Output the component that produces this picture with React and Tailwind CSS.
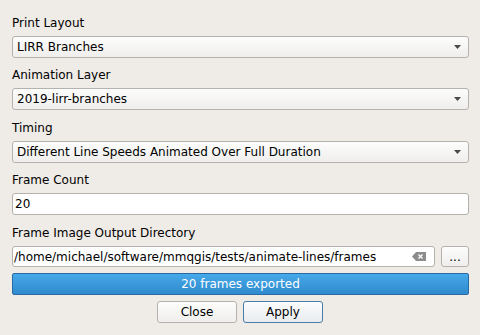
import React from "react";

const font = { fontFamily: '"DejaVu Sans", "Liberation Sans", sans-serif' };

function Arrow() {
  return (
    <svg width="7" height="4" viewBox="0 0 7 4" className="block">
      <path d="M0 0 H7 L3.5 4 Z" fill="#4a4a4a" />
    </svg>
  );
}

function Combo({ text }) {
  return (
    <div className="flex h-[22px] w-[457px] items-center justify-between rounded-[3px] border border-[#b5b2ae] bg-gradient-to-b from-[#fdfdfd] to-[#efeeec] pl-[4px] pr-[7px] text-[12px] text-black">
      <span>{text}</span>
      <Arrow />
    </div>
  );
}

function Label({ children, top }) {
  return (
    <div className={`h-[16px] text-[12px] leading-[16px] text-black ${top}`}>{children}</div>
  );
}

function ClearIcon() {
  return (
    <svg width="14" height="9" viewBox="0 0 14 9" className="block">
      <path d="M0 4.5 L4 0 H14 V9 H4 Z" fill="#8c8c8c" />
      <path d="M6.5 2.5 L10.5 6.5 M10.5 2.5 L6.5 6.5" stroke="#ffffff" strokeWidth="1.3" />
    </svg>
  );
}

export default function App() {
  return (
    <div className="h-[335px] w-[480px] bg-[#efebe7] pl-[12px]" style={font}>
      <div className="flex flex-col">
        <Label top="mt-[15px]">Print Layout</Label>
        <div className="mt-[5px]">
          <Combo text="LIRR Branches" />
        </div>
        <Label top="mt-[9px]">Animation Layer</Label>
        <div className="mt-[5px]">
          <Combo text="2019-lirr-branches" />
        </div>
        <Label top="mt-[10px]">Timing</Label>
        <div className="mt-[5px]">
          <Combo text="Different Line Speeds Animated Over Full Duration" />
        </div>
        <Label top="mt-[9px]">Frame Count</Label>
        <div className="mt-[5px] flex h-[22px] w-[457px] items-center rounded-[3px] border border-[#b5b2ae] bg-white pl-[2px] text-[12px] text-black">
          20
        </div>
        <Label top="mt-[10px]">Frame Image Output Directory</Label>
        <div className="mt-[5px] flex w-[457px] gap-[6px]">
          <div className="flex h-[21px] w-[423px] items-center justify-between rounded-[3px] border border-[#b5b2ae] bg-white pl-[1px] pr-[8px] text-[12px] text-black">
            <span>/home/michael/software/mmqgis/tests/animate-lines/frames</span>
            <ClearIcon />
          </div>
          <div className="flex h-[21px] w-[28px] items-center justify-center rounded-[3px] border border-[#b5b2ae] bg-gradient-to-b from-[#fdfdfd] to-[#efeeec] text-[12px] leading-none text-black">
            ...
          </div>
        </div>
        <div className="mt-[6px] flex h-[22px] w-[457px] items-center justify-center rounded-[2px] border border-[#2a6aa3] bg-gradient-to-b from-[#46a9e9] to-[#2f8ace] text-[12px] text-white">
          20 frames exported
        </div>
        <div className="mt-[6px] flex w-[457px] justify-center gap-[6px] pr-[1px]">
          <div className="flex h-[22px] w-[80px] items-center justify-center rounded-[3px] border border-[#b5b2ae] bg-gradient-to-b from-[#fdfdfd] to-[#efeeec] text-[12px] text-black">
            Close
          </div>
          <div className="flex h-[22px] w-[80px] items-center justify-center rounded-[3px] border border-[#4a7ca8] bg-gradient-to-b from-[#fbfcfd] to-[#e9ecef] text-[12px] text-black">
            Apply
          </div>
        </div>
      </div>
    </div>
  );
}
